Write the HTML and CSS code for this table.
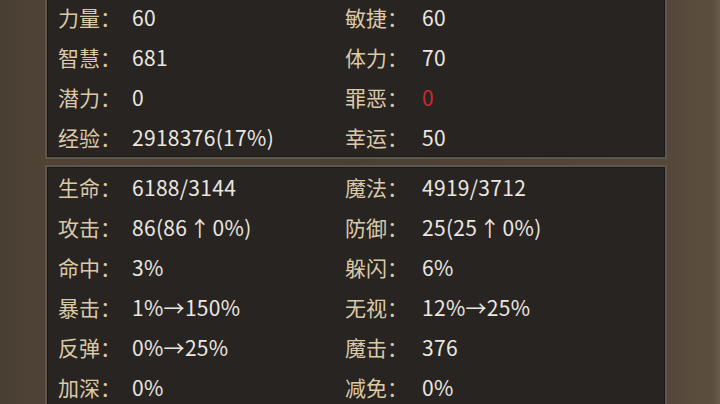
FILE: index.html
```html
<!DOCTYPE html>
<html lang="zh">
<head>
<meta charset="utf-8">
<link rel="stylesheet" href="styles.css">
</head>
<body>
<div class="frame">
  <section class="panel panel-top">
    <div class="row"><span class="lab">力量：</span><span class="val">60</span><span class="lab">敏捷：</span><span class="val">60</span></div>
    <div class="row"><span class="lab">智慧：</span><span class="val">681</span><span class="lab">体力：</span><span class="val">70</span></div>
    <div class="row"><span class="lab">潜力：</span><span class="val">0</span><span class="lab">罪恶：</span><span class="val red">0</span></div>
    <div class="row"><span class="lab">经验：</span><span class="val">2918376(17%)</span><span class="lab">幸运：</span><span class="val">50</span></div>
  </section>
  <section class="panel panel-bottom">
    <div class="row"><span class="lab">生命：</span><span class="val">6188/3144</span><span class="lab">魔法：</span><span class="val">4919/3712</span></div>
    <div class="row"><span class="lab">攻击：</span><span class="val">86(86<span class="up">↑</span>0%)</span><span class="lab">防御：</span><span class="val">25(25<span class="up">↑</span>0%)</span></div>
    <div class="row"><span class="lab">命中：</span><span class="val">3%</span><span class="lab">躲闪：</span><span class="val">6%</span></div>
    <div class="row"><span class="lab">暴击：</span><span class="val">1%→150%</span><span class="lab">无视：</span><span class="val">12%→25%</span></div>
    <div class="row"><span class="lab">反弹：</span><span class="val">0%→25%</span><span class="lab">魔击：</span><span class="val">376</span></div>
    <div class="row"><span class="lab">加深：</span><span class="val">0%</span><span class="lab">减免：</span><span class="val">0%</span></div>
  </section>
</div>
</body>
</html>
```

FILE: styles.css
```css
html, body {
  margin: 0;
  padding: 0;
  width: 720px;
  height: 404px;
  overflow: hidden;
}
body {
  background: linear-gradient(90deg, #4a3f33 0%, #4f4336 6%, #4b4034 50%, #55483a 93%, #5c4e3f 99%, #6a5b4a 100%);
  font-family: "Noto Sans CJK SC", "Noto Sans", sans-serif;
}
.frame {
  display: flex;
  flex-direction: column;
  gap: 6px;
  margin-left: 45px;
  width: 622px;
  margin-top: -24px;
}
.panel {
  background: #272422;
  border: 2px solid #5d564c;
  box-shadow: inset 0 0 0 1px #1c1a18;
  padding: 0 0 0 11px;
}
.panel-top {
  padding-top: 19px;
  height: 160px;
}
.panel-bottom {
  padding-top: 0;
}
.row {
  display: grid;
  grid-template-columns: 74px 213px 77px 1fr;
  height: 40px;
  align-items: center;
  font-size: 21px;
  line-height: 40px;
}
.lab {
  color: #dcc9a8;
}
.val {
  color: #ebe7e0;
  letter-spacing: 0.3px;
}
.up {
  margin: 0 2px;
}
.red {
  color: #cc2a30;
}
```
